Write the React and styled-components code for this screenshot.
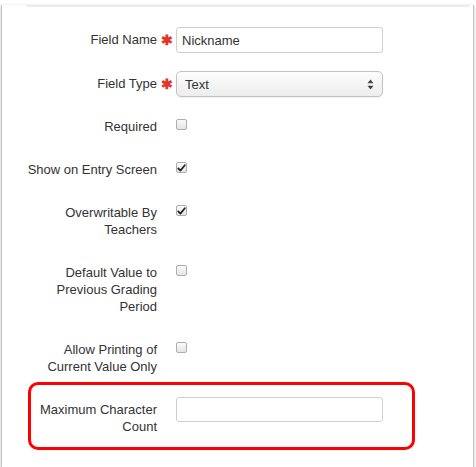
import React from 'react'
import styled, { createGlobalStyle } from 'styled-components'

const GlobalStyle = createGlobalStyle`
  html, body {
    margin: 0;
    padding: 0;
    background: #fff;
  }
  body {
    font-family: "Liberation Sans", Arial, sans-serif;
    font-size: 13px;
    color: #333;
  }
`

const Window = styled.div`
  box-sizing: border-box;
  width: 473px;
  height: 463px;
  margin-left: 1px;
  background: #fff;
  border: 1px solid #c4c4c4;
  border-top: none;
  box-shadow: 0 1px 3px rgba(0, 0, 0, 0.25);
`

const TopRule = styled.div`
  height: 2px;
  margin: 5px 3px 0 24px;
  background: #ececec;
`

const Form = styled.div`
  display: flex;
  flex-direction: column;
  gap: 15px;
  padding: 20px 0 0 25px;
`

const Row = styled.div`
  display: grid;
  grid-template-columns: 130px 19px 207px;
  align-items: start;
  margin-left: ${p => (p.$inset ? '-4px' : '0')};
`

const Label = styled.div`
  text-align: right;
  line-height: 17px;
  padding: ${p => (p.$input ? '4px 0 4px' : '6px 0 5px')};
  color: #333;
`

const Required = styled.span`
  color: #e0352b;
  font-size: 14px;
  line-height: 26px;
  text-align: center;
  font-weight: bold;
`

const TextInput = styled.input`
  box-sizing: border-box;
  width: 207px;
  height: ${p => (p.$short ? '25px' : '26px')};
  margin: ${p => (p.$short ? '2px 0 0' : '0 0 3px')};
  padding: 0 5px;
  border: 1px solid #cfcfcf;
  border-radius: 3px;
  font-family: "Liberation Sans", Arial, sans-serif;
  font-size: 13px;
  color: #333;
  background: #fff;
  outline: none;
`

const Select = styled.div`
  box-sizing: border-box;
  width: 207px;
  height: 26px;
  padding: 0 8px;
  display: flex;
  align-items: center;
  justify-content: space-between;
  border: 1px solid #c2c2c2;
  border-radius: 5px;
  background: linear-gradient(#fdfdfd, #ededed);
  color: #333;
  box-shadow: 0 1px 1px rgba(0, 0, 0, 0.06);
`

const Box = styled.span`
  box-sizing: border-box;
  display: flex;
  align-items: center;
  justify-content: center;
  width: 11px;
  height: 11px;
  margin-top: 7px;
  border: 1px solid #adadad;
  border-radius: 2px;
  background: linear-gradient(#fafafa, #e4e4e4);
`

const Highlight = styled.div`
  box-sizing: border-box;
  width: 387px;
  margin: -13px 0 0 1px;
  padding: 10px 0 7px 0;
  border: 3px solid #f00;
  border-radius: 10px;
`

function Checkbox({ checked }) {
  return (
    <Box>
      {checked && (
        <svg width="9" height="8" viewBox="0 0 9 8">
          <path d="M1.2 4.3 L3.4 6.6 L7.8 1.2" fill="none" stroke="#222" strokeWidth="1.7" strokeLinecap="round" strokeLinejoin="round" />
        </svg>
      )}
    </Box>
  )
}

function Arrows() {
  return (
    <svg width="7" height="11" viewBox="0 0 7 11">
      <path d="M3.5 0.5 L6.5 4.3 L0.5 4.3 Z" fill="#444" />
      <path d="M3.5 10.5 L6.5 6.7 L0.5 6.7 Z" fill="#444" />
    </svg>
  )
}

const checks = [
  { label: 'Required', checked: false },
  { label: 'Show on Entry Screen', checked: true },
  { label: 'Overwritable By Teachers', checked: true },
  { label: 'Default Value to Previous Grading Period', checked: false },
  { label: 'Allow Printing of Current Value Only', checked: false },
]

export default function App() {
  return (
    <>
      <GlobalStyle />
      <Window>
        <TopRule />
        <Form>
          <Row>
            <Label $input>Field Name</Label>
            <Required>✱</Required>
            <TextInput defaultValue="Nickname" />
          </Row>
          <Row>
            <Label $input>Field Type</Label>
            <Required>✱</Required>
            <Select>
              <span>Text</span>
              <Arrows />
            </Select>
          </Row>
          {checks.map(c => (
            <Row key={c.label}>
              <Label>{c.label}</Label>
              <span />
              <Checkbox checked={c.checked} />
            </Row>
          ))}
          <Highlight>
            <Row $inset>
              <Label>Maximum Character Count</Label>
              <span />
              <TextInput $short />
            </Row>
          </Highlight>
        </Form>
      </Window>
    </>
  )
}
